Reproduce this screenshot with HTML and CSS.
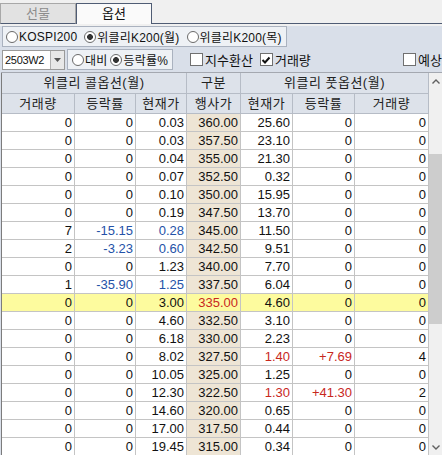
FILE: index.html
```html
<!DOCTYPE html>
<html lang="ko">
  <head>
    <meta charset="UTF-8" />
    <title>옵션</title>
    <link rel="stylesheet" href="styles.css">
  </head>
  <body>
    <div class="tabs">
      <div class="tab">선물</div>
      <div class="tab active">옵션</div>
      <div class="tab-rest"></div>
    </div>

    <div class="panel">
      <div class="bar">
        <div class="group">
          <label class="opt"><span class="radio"></span>KOSPI200</label>
          <label class="opt"><span class="radio on"></span>위클리K200(월)</label>
          <label class="opt"><span class="radio"></span>위클리K200(목)</label>
        </div>
      </div>

      <div class="bar">
        <div class="combo">
          <span class="combo-text">2503W2</span>
          <span class="combo-btn">
            <svg width="7" height="4" viewBox="0 0 7 4"><path d="M0 0h7L3.5 4z" fill="#555"/></svg>
          </span>
        </div>
        <div class="group small">
          <label class="opt"><span class="radio"></span>대비</label>
          <label class="opt"><span class="radio on"></span>등락률%</label>
        </div>
        <label class="chk first"><span class="box"></span>지수환산</label>
        <label class="chk"><span class="box">
          <svg width="10" height="10" viewBox="0 0 10 10"><path d="M1.5 5l2.5 2.5 4.5-5" fill="none" stroke="#111" stroke-width="2"/></svg>
        </span>거래량</label>
        <label class="chk last"><span class="box"></span>예상</label>
      </div>

      <div class="grid">
        <div class="sheet">
          <div class="cols head1">
            <div class="h span3">위클리 콜옵션(월)</div>
            <div class="h">구분</div>
            <div class="h span3">위클리 풋옵션(월)</div>
          </div>
          <div class="cols head2">
            <div class="h">거래량</div>
            <div class="h">등락률</div>
            <div class="h">현재가</div>
            <div class="h">행사가</div>
            <div class="h">현재가</div>
            <div class="h">등락률</div>
            <div class="h">거래량</div>
          </div>

          <div class="cols row"><div>0</div><div>0</div><div>0.03</div><div class="k">360.00</div><div>25.60</div><div>0</div><div>0</div></div>
          <div class="cols row"><div>0</div><div>0</div><div>0.03</div><div class="k">357.50</div><div>23.10</div><div>0</div><div>0</div></div>
          <div class="cols row"><div>0</div><div>0</div><div>0.04</div><div class="k">355.00</div><div>21.30</div><div>0</div><div>0</div></div>
          <div class="cols row"><div>0</div><div>0</div><div>0.07</div><div class="k">352.50</div><div>0.32</div><div>0</div><div>0</div></div>
          <div class="cols row"><div>0</div><div>0</div><div>0.10</div><div class="k">350.00</div><div>15.95</div><div>0</div><div>0</div></div>
          <div class="cols row"><div>0</div><div>0</div><div>0.19</div><div class="k">347.50</div><div>13.70</div><div>0</div><div>0</div></div>
          <div class="cols row"><div>7</div><div class="dn">-15.15</div><div class="dn">0.28</div><div class="k">345.00</div><div>11.50</div><div>0</div><div>0</div></div>
          <div class="cols row"><div>2</div><div class="dn">-3.23</div><div class="dn">0.60</div><div class="k">342.50</div><div>9.51</div><div>0</div><div>0</div></div>
          <div class="cols row"><div>0</div><div>0</div><div>1.23</div><div class="k">340.00</div><div>7.70</div><div>0</div><div>0</div></div>
          <div class="cols row"><div>1</div><div class="dn">-35.90</div><div class="dn">1.25</div><div class="k">337.50</div><div>6.04</div><div>0</div><div>0</div></div>
          <div class="cols row atm"><div>0</div><div>0</div><div>3.00</div><div class="k up">335.00</div><div>4.60</div><div>0</div><div>0</div></div>
          <div class="cols row"><div>0</div><div>0</div><div>4.60</div><div class="k">332.50</div><div>3.10</div><div>0</div><div>0</div></div>
          <div class="cols row"><div>0</div><div>0</div><div>6.18</div><div class="k">330.00</div><div>2.23</div><div>0</div><div>0</div></div>
          <div class="cols row"><div>0</div><div>0</div><div>8.02</div><div class="k">327.50</div><div class="up">1.40</div><div class="up">+7.69</div><div>4</div></div>
          <div class="cols row"><div>0</div><div>0</div><div>10.05</div><div class="k">325.00</div><div>1.25</div><div>0</div><div>0</div></div>
          <div class="cols row"><div>0</div><div>0</div><div>12.30</div><div class="k">322.50</div><div class="up">1.30</div><div class="up">+41.30</div><div>2</div></div>
          <div class="cols row"><div>0</div><div>0</div><div>14.60</div><div class="k">320.00</div><div>0.65</div><div>0</div><div>0</div></div>
          <div class="cols row"><div>0</div><div>0</div><div>17.00</div><div class="k">317.50</div><div>0.44</div><div>0</div><div>0</div></div>
          <div class="cols row"><div>0</div><div>0</div><div>19.45</div><div class="k">315.00</div><div>0.34</div><div>0</div><div>0</div></div>
        </div>

        <div class="scroll">
          <div class="arrow">
            <svg width="8" height="5" viewBox="0 0 8 5"><path d="M0.5 4.5L4 1l3.5 3.5" fill="none" stroke="#606060" stroke-width="1.4"/></svg>
          </div>
          <div class="track"><div class="thumb"></div></div>
          <div class="arrow">
            <svg width="8" height="5" viewBox="0 0 8 5"><path d="M0.5 0.5L4 4l3.5-3.5" fill="none" stroke="#606060" stroke-width="1.4"/></svg>
          </div>
        </div>
      </div>
    </div>
  </body>
</html>
```

FILE: styles.css
```css
* {
  padding: 0;
  margin: 0;
  box-sizing: border-box;
}

html,
body {
  width: 442px;
  height: 455px;
  overflow: hidden;
}

body {
  background-color: #f0f0f0;
  font: 12px "Liberation Sans", "Noto Sans CJK KR", sans-serif;
  color: #111;
}

/* 탭 */
.tabs {
  display: flex;
  align-items: flex-end;
  height: 24px;
}

.tab {
  width: 76px;
  height: 21px;
  line-height: 19px;
  text-align: center;
  font-size: 13px;
  color: #8c8c8c;
  background-color: #e2e2e2;
  border: 1px solid #a8a8a8;
  border-bottom-color: #4f5c74;
}

.tab.active {
  color: #111;
  background-color: #fafafa;
  border-color: #4f5c74;
  border-bottom: none;
}

.tab-rest {
  flex: 1;
  height: 1px;
  background-color: #4f5c74;
}

/* 상단 조건 영역 */
.panel {
  height: 431px;
  background-color: #d9dfe9;
  padding-left: 1px;
}

.bar {
  display: flex;
  align-items: center;
  height: 21px;
  margin-top: 2px;
  padding-left: 1px;
}

.group {
  display: flex;
  align-items: center;
  gap: 7px;
  height: 21px;
  padding: 0 4px 0 3px;
  background-color: #eef1f5;
  border: 1px solid #aab2bf;
  letter-spacing: 0.2px;
}

.group.small {
  margin-left: 2px;
  gap: 3px;
  padding-left: 4px;
}

.opt,
.chk {
  display: flex;
  align-items: center;
  white-space: nowrap;
}

.radio {
  width: 12px;
  height: 12px;
  margin-right: 1px;
  border: 1px solid #6a6a6a;
  border-radius: 50%;
  background-color: #fff;
}

.radio.on {
  background: radial-gradient(circle, #333 0 2.6px, #fff 3.2px);
}

.combo {
  display: flex;
  width: 63px;
  height: 20px;
  background-color: #fff;
  border: 1px solid #9a9a9a;
}

.combo-text {
  flex: 1;
  line-height: 18px;
  padding-left: 2px;
  font-size: 11px;
  letter-spacing: -0.3px;
}

.combo-btn {
  display: flex;
  align-items: center;
  justify-content: center;
  width: 14px;
  background-color: #e8e8e8;
  border-left: 1px solid #b0b0b0;
}

.chk {
  gap: 2px;
  font-size: 13px;
}

.chk.first {
  margin-left: 17px;
}

.chk + .chk {
  margin-left: 7px;
}

.chk.last {
  margin-left: auto;
}

.box {
  display: flex;
  align-items: center;
  justify-content: center;
  width: 13px;
  height: 13px;
  background-color: #fff;
  border: 1px solid #707070;
}

/* 시세 표 */
.grid {
  display: flex;
  margin-top: 2px;
  border-top: 1px solid #a4a8b0;
}

.sheet {
  width: 428px;
  border-left: 1px solid #7c7c7c;
}

.cols {
  display: grid;
  grid-template-columns: 73px 61px 51px 54px 52px 62px 74px;
}

.cols > div {
  border-right: 1px solid #c4c4c4;
  border-bottom: 1px solid #c4c4c4;
  white-space: nowrap;
  overflow: hidden;
}

.span3 {
  grid-column: span 3;
}

.h {
  text-align: center;
  font-size: 13px;
  color: #222;
  background-color: #dde2ea;
  letter-spacing: 0.5px;
}

.cols > .h {
  border-color: #b6bcc6;
}

.head1 .h {
  height: 21px;
  line-height: 20px;
}

.head2 .h {
  height: 20px;
  line-height: 19px;
}

.row > div {
  height: 18px;
  line-height: 17px;
  padding-right: 2px;
  text-align: right;
  font-size: 13px;
  background-color: #fff;
}

.row > .k {
  background-color: #eee5d5;
}

.row.atm > div {
  background-color: #fdfb9e;
}

.dn {
  color: #2452a8;
}

.up {
  color: #c8281e;
}

/* 스크롤바 */
.scroll {
  display: flex;
  flex-direction: column;
  width: 13px;
  height: 383px;
  background-color: #f0f0f0;
}

.arrow {
  display: flex;
  align-items: center;
  justify-content: center;
  height: 17px;
}

.track {
  flex: 1;
}

.thumb {
  height: 170px;
  margin-top: 64px;
  background-color: #cdcdcd;
}
```
